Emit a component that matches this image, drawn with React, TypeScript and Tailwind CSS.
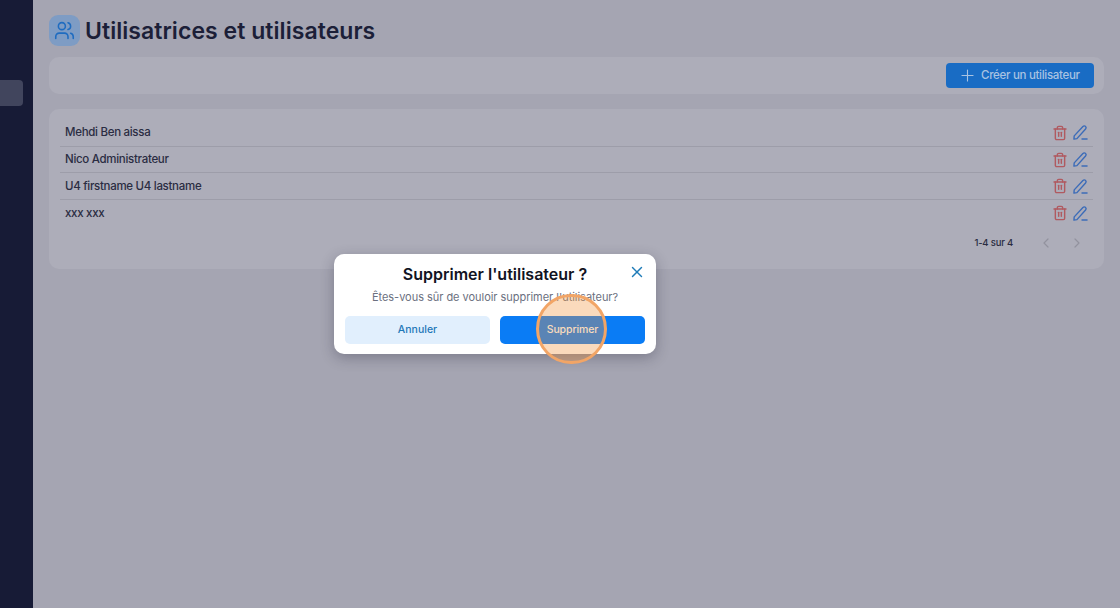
import React from 'react';
import { ChevronLeft, ChevronRight, Plus, Trash2, Users, X } from 'lucide-react';

const users = ['Mehdi Ben aissa', 'Nico Administrateur', 'U4 firstname U4 lastname', 'xxx xxx'];

const PenIcon = () => (
  <svg viewBox="0 0 16 16" className="h-[15px] w-[15px] text-[#3c6cb8]" fill="none" stroke="currentColor" strokeWidth="1.5" strokeLinecap="round" strokeLinejoin="round">
    <path d="M1 15 L1.3 11.6 L10.6 1.6 C11.5 0.7 12.6 0.7 13.4 1.5 C14.2 2.3 14.2 3.3 13.4 4.2 L4.2 14.5 Z" />
    <path d="M9.6 15 H15" />
  </svg>
);

const App = () => {
  return (
    <div className="relative flex h-[608px] w-[1120px] overflow-hidden bg-[#a5a5b2] font-['Inter',sans-serif] text-[#1e2138]">
      <aside className="w-[33px] shrink-0 bg-[#171b36] pt-[80px]">
        <div className="h-[26px] w-[23px] rounded-r-[4px] bg-[#41455d]" />
      </aside>

      <main className="flex-1 px-4 pt-[15px]">
        <div className="flex h-[31px] items-center gap-[5px]">
          <div className="flex h-[31px] w-[31px] items-center justify-center rounded-[9px] bg-[#7e9cc4]">
            <Users className="h-[21px] w-[21px] text-[#1f6cc0]" strokeWidth={1.8} />
          </div>
          <h1 className="pt-[2px] text-[23px] font-semibold leading-none tracking-[0.05px] text-[#1c1f38]">Utilisatrices et utilisateurs</h1>
        </div>

        <div className="mt-[11px] flex h-[37px] items-center justify-end rounded-[10px] bg-[#adadb9] px-[10px]">
          <button className="flex h-[25px] w-[148px] items-center gap-[4px] rounded-[4px] bg-[#196cc4] pl-[12px] text-[11.5px] font-medium tracking-[-0.3px] text-[#a9c3e2]">
            <Plus className="h-[19px] w-[19px]" strokeWidth={1.4} />
            Créer un utilisateur
          </button>
        </div>

        <section className="mt-[15px] h-[160px] rounded-[10px] bg-[#adadb9] px-[11px] pt-[11px]">
          {users.map((name, i) => (
            <div key={name} className={`flex h-[26.7px] items-center justify-between pl-[5px] pr-[5px] ${i < 3 ? 'border-b border-[#9d9da9]' : ''}`}>
              <span className="text-[11.5px] font-medium tracking-[-0.3px] text-[#2a2c42]">{name}</span>
              <div className="flex items-center gap-[5px]">
                <Trash2 className="h-[16px] w-[16px] text-[#b05a60]" strokeWidth={2.1} />
                <PenIcon />
              </div>
            </div>
          ))}
          <div className="mt-[8px] flex items-center justify-end pr-[8px]">
            <span className="mr-[25px] text-[9.5px] font-medium tracking-[-0.2px] text-[#2a2c42]">1-4 sur 4</span>
            <ChevronLeft className="mr-[15px] h-[16px] w-[16px] text-[#92929e]" strokeWidth={1.8} />
            <ChevronRight className="h-[16px] w-[16px] text-[#92929e]" strokeWidth={1.8} />
          </div>
        </section>
      </main>

      <div className="absolute left-[334px] top-[254px] h-[100px] w-[322px] rounded-[10px] bg-white px-[11px] pt-[10px] shadow-[0_4px_14px_rgba(30,30,50,0.3)]">
        <h2 className="text-center text-[16px] font-semibold leading-[21px] text-[#111322]">Supprimer l'utilisateur ?</h2>
        <button className="absolute right-[10px] top-[9px] text-[#1f7cb8]">
          <X className="h-[18px] w-[18px]" strokeWidth={1.9} />
        </button>
        <p className="mt-[4px] text-center text-[11px] leading-[16px] tracking-[-0.03px] text-[#6b7080]">Êtes-vous sûr de vouloir supprimer l'utilisateur?</p>
        <div className="mt-[11px] flex gap-[10px]">
          <button className="h-[28px] flex-1 rounded-[5px] bg-[#e1effd] text-[10.5px] font-medium text-[#1f78b8]">Annuler</button>
          <button className="h-[28px] flex-1 rounded-[5px] bg-[#0a7cf5] text-[10.5px] font-medium tracking-[-0.1px] text-white">Supprimer</button>
        </div>
      </div>

      {/* click highlight */}
      <div className="absolute left-[536px] top-[294px] h-[70px] w-[71px] rounded-full border-[3px] border-[#f2a566] bg-[#f09540]/35" />
    </div>
  );
};

export default App;
